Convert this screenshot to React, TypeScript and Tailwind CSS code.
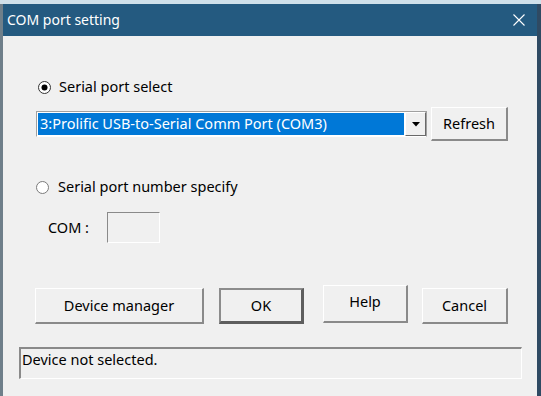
import React from 'react';

// --- small pieces ---
const Radio = ({ checked }: { checked?: boolean }) => (
    <svg width="13" height="13" viewBox="0 0 13 13" className="shrink-0">
        <circle cx="6.5" cy="6.5" r="6" fill="#ffffff" stroke={checked ? '#333333' : '#7a7a7a'} strokeWidth="1" />
        {checked && <circle cx="6.5" cy="6.5" r="3" fill="#000000" />}
    </svg>
);

const Button = ({ label, className = '', isDefault = false }: { label: string; className?: string; isDefault?: boolean }) => (
    <button
        type="button"
        className={
            'flex items-center justify-center bg-[#f0f0f0] text-black ' +
            (isDefault
                ? 'border-2 border-[#8c8c8c] border-r-[3px] border-b-[3px] border-r-[#5e5e5e] border-b-[#5e5e5e] '
                : 'border border-white border-r-2 border-b-2 border-r-[#8a8a8a] border-b-[#8a8a8a] ') +
            className
        }
    >
        {label}
    </button>
);

export default function App() {
    return (
        <div
            className="w-[541px] h-[396px] overflow-hidden flex flex-col bg-[#7d8d98] text-[14.5px] text-black"
            style={{ fontFamily: '"Noto Sans", "Open Sans", sans-serif' }}
        >
            <div className="h-[4px] bg-[#cfe0ea] shrink-0" />
            <div className="flex flex-1 min-h-0">
                <div className="w-[3px] bg-[#6f7f8a] shrink-0" />
                <div className="w-[534px] flex flex-col">
                    {/* title bar */}
                    <div className="h-[32px] bg-[#245a80] flex items-center justify-between pl-[4px] pr-[12px] shrink-0">
                        <span className="text-white text-[14px] leading-none">COM port setting</span>
                        <svg width="12" height="12" viewBox="0 0 12 12">
                            <path d="M0.5 0.5 L11.5 11.5 M11.5 0.5 L0.5 11.5" stroke="#ffffff" strokeWidth="1.1" />
                        </svg>
                    </div>

                    {/* client */}
                    <div className="flex-1 bg-[#f0f0f0] flex flex-col">
                        <div className="mt-[41px] pl-[35px] h-[20px] flex items-center gap-[8px]">
                            <Radio checked />
                            <span>Serial port select</span>
                        </div>

                        <div className="mt-[10px] pl-[33px] h-[34px] flex items-center gap-[4px]">
                            <div className="w-[391px] h-[26px] flex border border-[#a0a0a0] border-b-white bg-white">
                                <div className="flex-1 m-[1px] bg-[#0078d7] text-white flex items-center pl-[2px] whitespace-nowrap">
                                    3:Prolific USB-to-Serial Comm Port (COM3)
                                </div>
                                <div className="w-[21px] flex items-center justify-center bg-[#f0f0f0] border border-white border-r-[#696969] border-b-[#696969]">
                                    <svg width="8" height="5" viewBox="0 0 8 5">
                                        <path d="M0 0 H8 L4 4.5 Z" fill="#000000" />
                                    </svg>
                                </div>
                            </div>
                            <Button label="Refresh" className="w-[77px] h-[34px]" />
                        </div>

                        <div className="mt-[36px] pl-[33px] h-[20px] flex items-center gap-[9px]">
                            <Radio />
                            <span>Serial port number specify</span>
                        </div>

                        <div className="mt-[15px] pl-[45px] h-[31px] flex items-center gap-[15px]">
                            <span className="w-[44px]">COM :</span>
                            <div className="w-[53px] h-[31px] bg-[#f0f0f0] border border-[#8a8a8a] border-r-white border-b-white" />
                        </div>

                        <div className="mt-[42px] pl-[32px] flex items-start">
                            <Button label="Device manager" className="mt-[3px] w-[169px] h-[36px]" />
                            <Button label="OK" isDefault className="mt-[3px] ml-[15px] w-[85px] h-[36px]" />
                            <Button label="Help" className="ml-[19px] w-[85px] h-[38px] pb-[4px]" />
                            <Button label="Cancel" className="mt-[3px] ml-[14px] w-[86px] h-[36px]" />
                        </div>

                        <div className="mt-[23px] ml-[16px] w-[503px] h-[32px] border-2 border-[#8a8a8a] border-r border-b border-r-white border-b-white pl-[1px] leading-[20px]">
                            Device not selected.
                        </div>
                    </div>
                </div>
                <div className="w-[4px] bg-[#2f4a63] shrink-0" />
            </div>
        </div>
    );
}
